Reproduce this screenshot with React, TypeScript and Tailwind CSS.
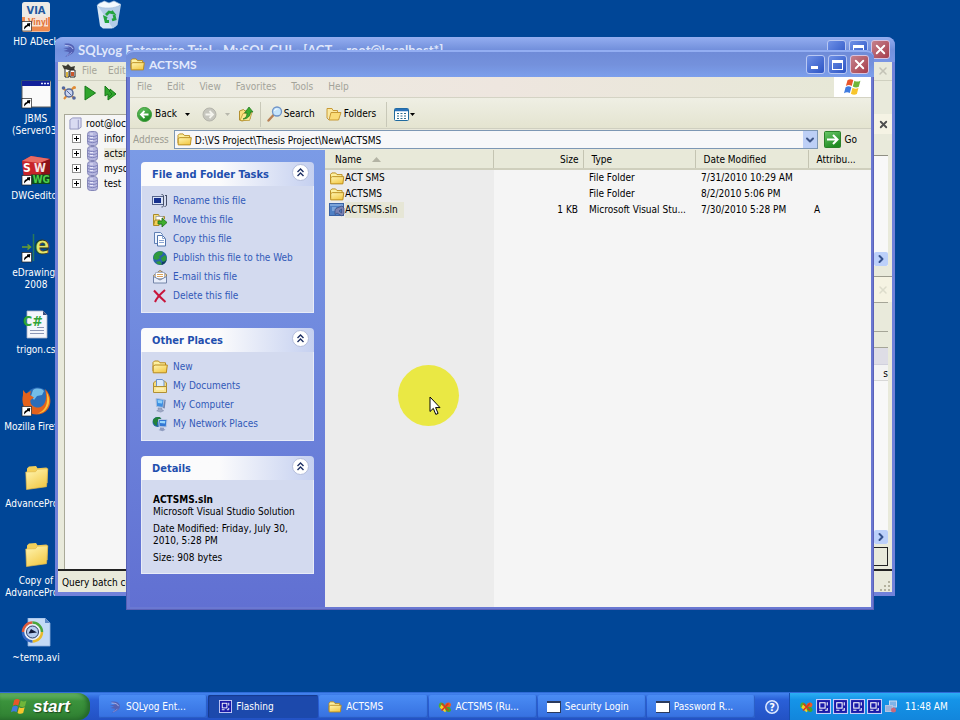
import React from "react";
import { ChevronDown, ChevronRight, X } from "lucide-react";

interface IconProps {
  className?: string;
}

interface DesktopItem {
  label: string[];
  icon: React.ReactNode;
}

interface LinkItem {
  label: string;
  icon: React.ReactNode;
}

// ---------- Shared icons ----------

function FolderIcon({ className }: IconProps) {
  return (
    <svg viewBox="0 0 16 14" className={className} aria-hidden="true">
      <path d="M1 11V2.500L2.500 1h4L8 2.800h5.500V5" fill="#fdf0a0" stroke="#b8891a" />
      <path d="M1.200 12.800V6L3 5h12.300l-1 7.800z" fill="url(#folder)" stroke="#b8891a" strokeLinejoin="round" />
    </svg>
  );
}

function BigFolder() {
  return (
    <svg viewBox="0 0 30 30" className="size-[30px]" aria-hidden="true">
      <path d="M6 22V4.500L8 2.500l7-.6 1.500 2.300 9-.7 1 1.500V19z" fill="#f2cf5a" />
      <path d="M5.500 25.500 4.800 8l9.700-.3 2-2.400 10.300-.6-1.300 18z" fill="url(#folder)" stroke="#e3b94a" strokeWidth=".7" />
    </svg>
  );
}

function Shortcut() {
  return (
    <g>
      <rect x="1" y="19.500" width="9.500" height="9.500" fill="#fff" stroke="#222" strokeWidth=".7" />
      <path d="M3 27.500c0-3 1-4.200 3-4.500v-1.500l3.300-.5-.5 3.800-1.200-.8c-2 .5-2.600 1.500-4.600 3.500z" fill="#000" />
    </g>
  );
}

function WindowsFlag({ className }: IconProps) {
  return (
    <svg viewBox="0 0 20 18" className={className} aria-hidden="true">
      <path d="M4.500 2.200c2-1.500 4-1.300 5.800-.1L8.700 8c-2-1.200-3.800-1.200-5.800.1z" fill="#e8562b" />
      <path d="M11.400 2.700c2 1.200 4 1.200 6 0l-1.600 6c-2 1.200-4 1-6-.2z" fill="#6fb63a" />
      <path d="M2.600 9.200c2-1.300 3.900-1.200 5.800 0L6.800 15c-2-1.200-3.800-1.100-5.800.2z" fill="#3f7be0" />
      <path d="M9.500 9.700c2 1.200 4 1.300 6 .1L13.900 16c-2 1.200-4 1-6-.2z" fill="#f7c52d" />
    </svg>
  );
}

function DolphinIcon({ className }: IconProps) {
  return (
    <svg viewBox="0 0 16 16" className={className} aria-hidden="true">
      <path d="M3 2c5-1.200 10 .5 10.500 4.500C14 11 9.500 13 4 15c2.500-2 4-3.500 4-5L2.500 9 7 7.500 2 6l6-.5C7 4 5 3 3 2z" fill="#5361b4" />
      <path d="M4 3.500c4.500 0 7 1 8 3.500" stroke="#b4bff0" fill="none" />
      <path d="M11 10c-1 1.500-3 2.500-5 3.500" stroke="#8b95dc" fill="none" />
    </svg>
  );
}

function CamIcon({ className }: IconProps) {
  return (
    <svg viewBox="0 0 14 14" className={className} aria-hidden="true">
      <rect x=".5" y=".5" width="13" height="13" fill="#1a1aa8" stroke="#c9cdfa" />
      <rect x="3.500" y="3.500" width="5" height="5" fill="none" stroke="#fff" />
      <path d="M8.500 10.500h2v-2M10.500 3v3M3 10.500h3" stroke="#fff" fill="none" />
    </svg>
  );
}

function RibbonIcon({ className }: IconProps) {
  return (
    <svg viewBox="0 0 16 14" className={className} aria-hidden="true">
      <path d="M1 4c1-3 5-3 7 1L5 9C2 9 0 7 1 4z" fill="#4fae2c" />
      <path d="M8 5c1-4 6-4 7-1 0 3-2 4-5 4z" fill="#ef5a24" />
      <path d="M4 4l7 6-3 3-6-5z" fill="#f5cf28" />
      <path d="M9 7c4-1 6 1 6 4-2 3-6 2-7-2z" fill="#3fa82f" />
      <path d="M4 3l8 8M12 3l-8 8" stroke="#d9361d" strokeWidth="1.800" />
    </svg>
  );
}

function AppWindowIcon({ className }: IconProps) {
  return (
    <svg viewBox="0 0 14 12" className={className} aria-hidden="true">
      <rect width="14" height="12" fill="#2b3a5c" />
      <rect y="2" width="13" height="9" fill="#fff" />
    </svg>
  );
}

function Caret({ className }: IconProps) {
  return (
    <svg viewBox="0 0 5 3" className={className} aria-hidden="true">
      <path d="M0 0h5L2.500 3z" fill="currentColor" />
    </svg>
  );
}

function SlnIcon() {
  return (
    <svg viewBox="0 0 16 14" className="h-3.5 w-4" aria-hidden="true">
      <rect x=".5" y=".5" width="14" height="12" fill="#4f80c4" stroke="#3a62a4" />
      <path d="M1 2h13M3 5h4M3 7h3" stroke="#a9c6ee" />
      <path d="M8 5l5-2 2 2v6l-2 2-5-3-2 1.500v-5zM12.500 6 10 8l2.500 2z" fill="#7b83b4" stroke="#3a4a80" strokeWidth=".7" />
    </svg>
  );
}

// ---------- Task pane icons ----------

function RenameIcon() {
  return (
    <svg viewBox="0 0 16 16" className="size-4" aria-hidden="true">
      <rect x=".5" y="3.500" width="11" height="8" fill="#d8e2f8" stroke="#56648c" />
      <rect x="2" y="5" width="7" height="5" fill="#15308f" />
      <path d="M9.500 1.500c1.500 0 2 .5 2 1.500v9.500c0 1-.5 1.500-2 1.500M14.500 2.500V12c0 1-1 1.500-2 1.500M13 2.500h2" stroke="#444d66" fill="none" />
    </svg>
  );
}

function MoveIcon() {
  return (
    <svg viewBox="0 0 16 16" className="size-4" aria-hidden="true">
      <path d="M1.500 13V2.500h5l1 2h5V7" fill="#f8e184" stroke="#a98a2a" />
      <rect x="4" y="4.500" width="7" height="8" fill="#fff" stroke="#8b93a8" strokeWidth=".7" />
      <path d="M1.500 13.500 3 8h5l-1 5.500z" fill="#f4cf55" stroke="#a98a2a" />
      <path d="M6 9h4V6l5 4.500-5 4.500v-3H6z" fill="#3fae2e" stroke="#1d6e17" strokeWidth=".8" />
    </svg>
  );
}

function CopyIcon() {
  return (
    <svg viewBox="0 0 16 16" className="size-4" aria-hidden="true">
      <path d="M2.500 1.500h6l2 2v9h-8z" fill="#eef4fe" stroke="#6080b4" />
      <path d="M5.500 4.500h5l3 3v7.500h-8z" fill="#fff" stroke="#5174ac" />
      <path d="M10.500 4.500v3h3M7 9.500h5M7 11.500h5" stroke="#8aa5d2" fill="none" />
    </svg>
  );
}

function GlobeIcon() {
  return (
    <svg viewBox="0 0 16 16" className="size-4" aria-hidden="true">
      <circle cx="8" cy="8" r="7" fill="#2a63a8" />
      <path d="M2 5c2-4 7-4.500 9-3l-1 3-3 1 1 2-3 2-3.500-1zM9 8l4-3c2 2 2 5 0 7.500L10 11zM4 12l4-1 2 3.500c-2 .6-5 0-6-2.500z" fill="#2f9a3c" />
      <path d="M10 12c2 0 4-1 4.500-3 0 3-2 5.500-5 6z" fill="#143f66" />
    </svg>
  );
}

function MailIcon() {
  return (
    <svg viewBox="0 0 16 16" className="size-4" aria-hidden="true">
      <path d="M1.500 6.500 8 1.500l6.500 4v8h-13z" fill="#f3cd8c" stroke="#8a7d68" />
      <path d="M3.500 3.500h9v6h-9z" fill="#fff" stroke="#9aa7c4" strokeWidth=".8" />
      <path d="M5 5.500h6M5 7.500h6" stroke="#d9a25c" />
      <path d="M1.500 7.500 8 11l6.500-3.500v6.500h-13z" fill="#e7edfa" stroke="#7384a8" />
    </svg>
  );
}

function DeleteIcon() {
  return (
    <svg viewBox="0 0 16 16" className="size-4" aria-hidden="true">
      <path d="M2 2.500C5 6 9 10 13.500 14M13 2C9.500 5 5 9.500 3 14" stroke="#c8163c" strokeWidth="2" fill="none" />
    </svg>
  );
}

function DocsIcon() {
  return (
    <svg viewBox="0 0 16 16" className="size-4" aria-hidden="true">
      <path d="M1.500 13V5l2-2h9l2 2v8z" fill="#f8dc78" stroke="#b08f34" />
      <path d="M4.500 1.500h6l1.500 2v6h-7.500z" fill="#dcebfc" stroke="#6b93cf" />
      <path d="M1.500 8.500h13v6h-13z" fill="#fae693" stroke="#b08f34" />
      <path d="M4 11h8" stroke="#fffbe0" />
    </svg>
  );
}

function ComputerIcon() {
  return (
    <svg viewBox="0 0 16 16" className="size-4" aria-hidden="true">
      <path d="M4 1.500 12 2.500 11 10.500l-6.500-1z" fill="#3d8fe2" stroke="#aebfdc" />
      <path d="M5.500 3l5 .6-.5 2.900-4-.5z" fill="#8fd0fa" />
      <path d="M12.500 2.500l1.200.5-1 8.500-1.700-.5z" fill="#6f83ac" />
      <path d="M6 11l4 .5v1.500l1.700.7-3 1.400-4-1.300 1.700-.9z" fill="#9fa9c6" stroke="#7380a0" strokeWidth=".5" />
    </svg>
  );
}

function NetworkIcon() {
  return (
    <svg viewBox="0 0 16 16" className="size-4" aria-hidden="true">
      <circle cx="5.500" cy="6" r="5" fill="#2567a8" />
      <path d="M1 4c2-4 7-3.500 8-2L7 5 5 6v4C2 9 .5 6.500 1 4z" fill="#23813a" />
      <path d="M6.500 3.500h8.500l-.8 7.500-7-.5z" fill="#3277d4" stroke="#b9c7e2" />
      <path d="M8 5h5.300l-.3 2.500L8 7z" fill="#97d4fa" />
      <path d="M8 11.500l4 .3v1.200l1.500.8-3 1.400-4-1.300 1.500-.7z" fill="#8f9cc0" />
    </svg>
  );
}

// ---------- Desktop icons ----------

const desktopItems: DesktopItem[] = [
  {
    label: ["HD ADeck"],
    icon: (
      <svg viewBox="0 0 30 30" className="size-[30px]" aria-hidden="true">
        <rect x="1" y="0" width="28" height="30" rx="2.500" fill="#eceae6" />
        <path d="M1 15h28v12.500a2 2 0 0 1-2 2H3a2 2 0 0 1-2-2z" fill="#ee8a50" />
        <rect x="4" y="14.500" width="23" height="10" fill="#f8e3d6" />
        <text x="15" y="11.500" textAnchor="middle" fontSize="11" fontWeight="bold" fill="#22589f">VIA</text>
        <text x="17" y="22.500" textAnchor="middle" fontSize="8" fontWeight="bold" fill="#e2743a">Vinyl</text>
        <Shortcut />
      </svg>
    ),
  },
  {
    label: ["JBMS", "(Server03)"],
    icon: (
      <svg viewBox="0 0 30 30" className="size-[30px]" aria-hidden="true">
        <rect x="1" y="2" width="29" height="26" fill="#fafafa" stroke="#5b5b5b" />
        <rect x="1" y="2" width="28" height="5" fill="#12219a" />
        <path d="M20 4.500h2M23 4.500h2M26 4.500h2" stroke="#dfe4ff" strokeWidth="1.500" />
        <Shortcut />
      </svg>
    ),
  },
  {
    label: ["DWGeditor"],
    icon: (
      <svg viewBox="0 0 30 30" className="size-[30px]" aria-hidden="true">
        <path d="M1 5 10 0l19 3v14l-10 7H3z" fill="#c8242a" />
        <path d="M1 5 10 0l19 3-10 4z" fill="#e76b64" />
        <path d="M19 7l10-4v15l-8 5z" fill="#8c1218" />
        <text x="2" y="16" fontSize="12" fontWeight="bold" fill="#fff">S</text>
        <text x="13" y="16" fontSize="12" fontWeight="bold" fill="#f6e4e4">W</text>
        <rect x="10" y="18.500" width="19" height="9.500" fill="#0d4a1c" />
        <text x="29" y="27" textAnchor="end" fontSize="10" fontWeight="bold" fill="#4fd04c">WG</text>
        <Shortcut />
      </svg>
    ),
  },
  {
    label: ["eDrawings", "2008"],
    icon: (
      <svg viewBox="0 0 30 30" className="size-[30px] overflow-visible" aria-hidden="true">
        <path d="M12.500 1v27" stroke="#28795b" strokeWidth="1.500" />
        <path d="M1 14h8M6.500 11.500 9.500 14l-3 2.500" stroke="#6aa02e" strokeWidth="1.500" fill="none" />
        <text x="14" y="21" fontSize="24" fontWeight="bold" fill="#e4e56b" stroke="#333a1a" strokeWidth=".8">e</text>
        <Shortcut />
      </svg>
    ),
  },
  {
    label: ["trigon.cs"],
    icon: (
      <svg viewBox="0 0 30 30" className="size-[30px]" aria-hidden="true">
        <path d="M6 1h16l4 4v23H6z" fill="#f4f6fb" stroke="#a9b2c8" strokeWidth=".8" />
        <path d="M22 1v4h4z" fill="#3c4f7a" />
        <path d="M9 20.500h14M9 23.500h14M16 17.500h7" stroke="#8c97b5" />
        <text x="2" y="16" fontSize="14" fontWeight="bold" fill="#30a436">C#</text>
      </svg>
    ),
  },
  {
    label: ["Mozilla Firefox"],
    icon: (
      <svg viewBox="0 0 30 30" className="size-[30px]" aria-hidden="true">
        <circle cx="16.500" cy="12.500" r="12" fill="#2b6dba" />
        <path d="M12 3c3-2 8-2 11 1l-2 4-5 1-3 4-3-4z" fill="#73bde9" />
        <path d="M24 2c6 5 7 14 3 20-5 7-16 7-21 2C2 20 .5 14 2 8l0-5 3 3.500L10 4l-1 4 4 2.500-3.500 2.500c-1 5 4 8 8 7.500 6-.5 9.500-8 6.500-18.500z" fill="#e4621c" />
        <path d="M25.500 5c4 6 3.500 13-1 18-2 2-5 3.500-8 3.500 7-2 11.500-9 9-21.500z" fill="#fbc23a" />
        <Shortcut />
      </svg>
    ),
  },
  { label: ["AdvancePro..."], icon: <BigFolder /> },
  { label: ["Copy of", "AdvancePro..."], icon: <BigFolder /> },
  {
    label: ["~temp.avi"],
    icon: (
      <svg viewBox="0 0 30 30" className="size-[30px]" aria-hidden="true">
        <path d="M7 0h17l5 5v23H7z" fill="#c4daf6" stroke="#8fb0dd" strokeWidth=".8" />
        <path d="M24 0v5h5z" fill="#5c86c4" />
        <circle cx="11.500" cy="14" r="9.500" fill="#e9eef6" />
        <path d="M2 14a9.500 9.500 0 0 1 9.500-9.500" stroke="#de5b3c" strokeWidth="2.500" fill="none" />
        <path d="M11.500 4.500A9.500 9.500 0 0 1 21 14" stroke="#4aa63c" strokeWidth="2.500" fill="none" />
        <path d="M21 14a9.500 9.500 0 0 1-9.500 9.500" stroke="#e8b92c" strokeWidth="2.500" fill="none" />
        <path d="M11.500 23.500A9.500 9.500 0 0 1 2 14" stroke="#3567c2" strokeWidth="2.500" fill="none" />
        <circle cx="11.500" cy="14" r="6" fill="#b7cdf0" stroke="#2c3f6b" />
        <path d="M7.500 15.500 10 11l6 3.500z" fill="#10193a" />
      </svg>
    ),
  },
];

function RecycleBin() {
  return (
    <svg viewBox="0 0 30 30" className="size-[30px]" aria-hidden="true">
      <path d="M3 6l22-1-3 21-4 2.500H9L6 26z" fill="#d7e6f5" />
      <path d="M4 6c5 3 17 2.500 23-1.500L23.500 25 19 28.500z" fill="#b4cde8" />
      <path d="M3 6c2-4 5-3 7-5l5 2 5-2 7 3.500C21 9 9 9 3 6z" fill="#f5fafe" stroke="#a5bfdc" strokeWidth=".7" />
      <path d="M12 15l3-3 4 1-1.500-2M20 15l1 4-3 1M15 21.500h-3l-1-4 2 1" stroke="#22a33d" strokeWidth="2.800" fill="none" />
    </svg>
  );
}

// ---------- Window chrome ----------

function WindowButtons() {
  return (
    <div className="flex gap-[3px]">
      <button aria-label="Minimize" className="flex size-[19px] items-end rounded-[3px] border border-[#b9c8f3] bg-linear-to-br from-[#6f90e6] to-[#2c53c4] p-1">
        <span className="h-[3px] w-[7px] bg-white" />
      </button>
      <button aria-label="Maximize" className="flex size-[19px] items-center justify-center rounded-[3px] border border-[#b9c8f3] bg-linear-to-br from-[#6f90e6] to-[#2c53c4]">
        <span className="h-[10px] w-[11px] border border-t-[3px] border-white" />
      </button>
      <button aria-label="Close" className="flex size-[19px] items-center justify-center rounded-[3px] border border-[#d6c3e0] bg-linear-to-br from-[#c4808c] to-[#a63c4c]">
        <X className="size-[15px] text-white" strokeWidth={3} />
      </button>
    </div>
  );
}

function ScrollRight() {
  return (
    <button aria-label="Scroll right" className="flex size-[14px] items-center justify-center rounded-[2px] bg-[#bcd0fa]">
      <ChevronRight className="size-3 text-[#34508c]" strokeWidth={4} />
    </button>
  );
}

const databases = ["infor", "actsms", "mysql", "test"];

function SqlYogWindow() {
  return (
    <section className="absolute top-[37px] right-[65px] bottom-[96px] left-[55px] flex flex-col rounded-t-lg bg-[#7182da] px-[3px] pb-1">
      <header className="-mx-[3px] flex h-[25px] shrink-0 items-start justify-between rounded-t-lg bg-linear-to-b from-[#94aef0] via-[#7390dc] to-[#7a96e4] pt-[3px] pr-[5px] pl-[6px]">
        <div className="flex items-center pt-px">
          <DolphinIcon className="mr-px size-4" />
          <h1 className="font-[Lato] text-[13px] leading-[18px] font-bold whitespace-pre text-[#dfe6fb]">
            SQLyog Enterprise Trial - MySQL GUI - [ACT  - root@localhost*]
          </h1>
        </div>
        <WindowButtons />
      </header>

      <div className="flex min-h-0 flex-1 flex-col bg-[#e9eadb]">
        <nav className="flex h-[19px] shrink-0 items-center gap-3 border-b border-[#cfd0c0] px-[3px] text-[#a5a598]">
          <svg viewBox="0 0 16 16" className="size-4" aria-hidden="true">
            <path d="M1 2l4 1 2-2 3 3 4-1-1 4H8L3 6z" fill="#3a3a32" />
            <path d="M4 6v8h4V8M9 7h5v7H9z" fill="#fff" stroke="#222" />
            <path d="M10 9h3v4h-3z" fill="#c9562c" />
            <path d="M5 9h2v5H5z" fill="#d8b23c" />
          </svg>
          <div className="-ml-[7px] flex flex-1 gap-[11px]">
            <button>File</button>
            <button>Edit</button>
          </div>
          <button aria-label="Close document">
            <X className="size-3 text-[#c3c3b6]" strokeWidth={3} />
          </button>
        </nav>

        <div className="flex h-[33px] shrink-0 items-start gap-1.5 pt-1 pl-[3px]">
          <svg viewBox="0 0 16 16" className="size-4" aria-hidden="true">
            <path d="M2 3l11 10M13 2 3 14" stroke="#e08b34" strokeWidth="2" />
            <circle cx="8" cy="8" r="4" fill="#c9d4ee" stroke="#54699c" strokeWidth="1.500" />
            <path d="M6 6l4 4" stroke="#54699c" />
            <circle cx="2.500" cy="3" r="1.800" fill="#53689e" />
            <circle cx="13" cy="13" r="1.800" fill="#53689e" />
            <circle cx="13.500" cy="2.500" r="1.500" fill="#e08b34" />
          </svg>
          <svg viewBox="0 0 12 16" className="ml-px h-4 w-3" aria-hidden="true">
            <path d="M1 1 11.500 8 1 15z" fill="#2fa52c" stroke="#187a1a" />
          </svg>
          <svg viewBox="0 0 14 16" className="ml-0.5 h-4 w-3.5" aria-hidden="true">
            <path d="M1 1v10l3-2v6l8-6-6-5v2z" fill="#2fa52c" stroke="#187a1a" />
            <path d="M5 6l3 3-3 3" stroke="#187a1a" fill="none" />
          </svg>
        </div>

        <div className="flex min-h-0 flex-1 pl-[6px]">
          <div className="flex-1 border-t border-l border-[#a9a998] bg-[#f6f6f6] pt-px pl-1">
            <div className="flex h-[15px] items-center gap-1">
              <svg viewBox="0 0 14 14" className="size-[13px]" aria-hidden="true">
                <path d="M1 3l3-2h9v10l-3 2H1z" fill="#d9dbf2" stroke="#9093bd" />
                <path d="M10 3v10" stroke="#9093bd" />
              </svg>
              <span>root@localhost</span>
            </div>
            <ul>
              {databases.map((name) => (
                <li key={name} className="flex h-[15px] items-center gap-1.5 pl-[3px]">
                  <span className="flex size-[9px] items-center justify-center border border-[#8e8e8e] bg-white">
                    <svg viewBox="0 0 5 5" className="size-[5px]" aria-hidden="true">
                      <path d="M0 2.500h5M2.500 0v5" stroke="#000" />
                    </svg>
                  </span>
                  <svg viewBox="0 0 11 15" className="h-[15px] w-[11px]" aria-hidden="true">
                    <rect x=".5" y=".5" width="10" height="14" rx="3" fill="#b5b6de" stroke="#8587b8" />
                    <path d="M1 4.500c3 1.500 6 1.500 9 0M1 7.500c3 1.500 6 1.500 9 0M1 10.500c3 1.500 6 1.500 9 0" stroke="#7f82bc" fill="none" />
                    <path d="M3 3h3M3 6.500h3M3 9.500h3" stroke="#e8e8fa" />
                  </svg>
                  <span className={name === "actsms" ? "bg-[#eceadb]" : ""}>{name}</span>
                </li>
              ))}
            </ul>
          </div>

          {/* Query and result panes, mostly behind the folder window */}
          <div className="flex w-[200px] flex-col pr-[4px]">
            <div className="-mr-[4px] flex h-[20px] items-center justify-end bg-[#f5f3e4] pr-[3px]">
              <button aria-label="Close query tab">
                <X className="size-[11px] text-[#4e4e4e]" strokeWidth={4} />
              </button>
            </div>
            <div className="h-[21px]" />
            <div className="flex h-[111px] items-end justify-end border-t border-[#8f8f84] bg-[#f8f8f8]">
              <ScrollRight />
            </div>
            <div className="h-[10px]" />
            <div className="-mr-[4px] flex h-[26px] items-center justify-end border-t border-[#9b9b8d] bg-[#f5f3e2] pr-[3px]">
              <button aria-label="Close result tab">
                <X className="size-3 text-[#dddccb]" strokeWidth={3} />
              </button>
            </div>
            <div className="h-[29px] border-t border-[#a5a597]" />
            <div className="h-[16px] border-t border-[#a5a597]" />
            <div className="h-[18px] border-y border-[#a5a597] border-b-[#d0d0dc] bg-[#dedde6]" />
            <div className="h-[16px] border-b border-[#d8d8d8] bg-[#f3f3f3] pt-[3px] text-right">s</div>
            <div className="flex flex-1 items-end justify-end bg-[#f8f8f8]">
              <ScrollRight />
            </div>
            <div className="my-[3px] h-[19px] shrink-0 border border-[#222]" />
          </div>
        </div>

        <footer className="flex h-[23px] shrink-0 items-center justify-between border-t-2 border-[#222] pt-0.5 pl-1">
          <span>Query batch completed successfully</span>
          <svg viewBox="0 0 12 12" className="mt-1 mr-px size-3" aria-hidden="true">
            <path d="M10 2v2M10 6v2M10 10v2M6 6v2M6 10v2M2 10v2" stroke="#b3b29d" strokeWidth="2" />
          </svg>
        </footer>
      </div>
    </section>
  );
}

// ---------- Folder window ----------

const fileTasks: LinkItem[] = [
  { label: "Rename this file", icon: <RenameIcon /> },
  { label: "Move this file", icon: <MoveIcon /> },
  { label: "Copy this file", icon: <CopyIcon /> },
  { label: "Publish this file to the Web", icon: <GlobeIcon /> },
  { label: "E-mail this file", icon: <MailIcon /> },
  { label: "Delete this file", icon: <DeleteIcon /> },
];

const otherPlaces: LinkItem[] = [
  { label: "New", icon: <FolderIcon className="h-3.5 w-4" /> },
  { label: "My Documents", icon: <DocsIcon /> },
  { label: "My Computer", icon: <ComputerIcon /> },
  { label: "My Network Places", icon: <NetworkIcon /> },
];

const files = [
  { name: "ACT SMS", size: "", type: "File Folder", date: "7/31/2010 10:29 AM", attr: "" },
  { name: "ACTSMS", size: "", type: "File Folder", date: "8/2/2010 5:06 PM", attr: "" },
  { name: "ACTSMS.sln", size: "1 KB", type: "Microsoft Visual Stu...", date: "7/30/2010 5:28 PM", attr: "A" },
];

function TaskPanel({ title, children }: { title: string; children: React.ReactNode }) {
  return (
    <section>
      <header className="flex h-6 items-center justify-between rounded-t-[4px] bg-linear-to-r from-[#fbfbfc] from-45% to-[#c5d0f0] pr-[5px] pl-[11px]">
        <h2 className="pt-px text-[11px] font-bold text-[#1f4fae]">{title}</h2>
        <button aria-label={`Collapse ${title}`} className="mb-1 flex size-[17px] items-center justify-center rounded-full border border-[#b3bddb] bg-white">
          <svg viewBox="0 0 9 9" className="size-[9px]" aria-hidden="true">
            <path d="M1.500 4 4.500 1l3 3M1.500 8l3-3 3 3" stroke="#1d2f63" strokeWidth="1.400" fill="none" />
          </svg>
        </button>
      </header>
      <div className="border border-t-0 border-[#e8ecf8] bg-[#d3daef]">{children}</div>
    </section>
  );
}

function LinkList({ items }: { items: LinkItem[] }) {
  return (
    <ul className="pt-[5px] pb-[7px] pl-[10px]">
      {items.map((item) => (
        <li key={item.label} className="h-[19px]">
          <a href="#" className="flex h-full items-center gap-[5px] text-[#3159b8]">
            {item.icon}
            {item.label}
          </a>
        </li>
      ))}
    </ul>
  );
}

function ExplorerWindow() {
  return (
    <section className="absolute top-[50px] right-[86px] bottom-[82px] left-[126px] flex flex-col rounded-t-lg bg-[#6a78d2] pr-[3px] pb-[3px] pl-1 shadow-[inset_1px_0_0_#5660b4,inset_-1px_-1px_0_#5b62b8]">
      <header className="-mr-[3px] -ml-1 flex h-[27px] shrink-0 items-center justify-between rounded-t-lg border-t-2 border-[#93aef2] bg-linear-to-b from-[#6f8bd8] via-[#7491dc] to-[#7c9fec] pr-[5px] pl-1">
        <div className="flex items-center gap-1">
          <FolderIcon className="h-[13px] w-[15px]" />
          <h1 className="font-[Lato] text-[12px] leading-4 font-bold text-[#e3eafc]">ACTSMS</h1>
        </div>
        <WindowButtons />
      </header>

      <nav className="flex h-[21px] shrink-0 items-stretch justify-between border-b border-[#d4d3c4] bg-linear-to-r from-[#ecede2] via-[#eee6df] to-[#e6e8d6]">
        <div className="flex gap-[15px] pl-[7px] text-[#a3a39a]">
          <button>File</button>
          <button>Edit</button>
          <button>View</button>
          <button>Favorites</button>
          <button>Tools</button>
          <button>Help</button>
        </div>
        <div className="flex w-[37px] items-center justify-center bg-white">
          <WindowsFlag className="h-[18px] w-5" />
        </div>
      </nav>

      <div className="flex h-[31px] shrink-0 items-center border-b border-[#cfcfc0] bg-linear-to-b from-[#efefe4] to-[#e4e4d0] pt-0.5 pl-[7px]">
        <button className="flex items-center gap-[3px]">
          <svg viewBox="0 0 15 15" className="size-[15px]" aria-hidden="true">
            <circle cx="7.500" cy="7.500" r="7" fill="url(#green)" stroke="#3b9a37" />
            <path d="M11.500 7.500h-7M7.500 4 4 7.500 7.500 11" stroke="#fff" strokeWidth="1.800" fill="none" />
          </svg>
          Back
        </button>
        <button aria-label="Back history" className="ml-2">
          <Caret className="h-[3px] w-[5px]" />
        </button>
        <button aria-label="Forward" className="ml-3">
          <svg viewBox="0 0 15 15" className="size-[15px]" aria-hidden="true">
            <circle cx="7.500" cy="7.500" r="6.500" fill="#c6c6be" stroke="#b4b4aa" />
            <path d="M3.500 7.500h7M7.500 4 11 7.500 7.500 11" stroke="#f4f4ee" strokeWidth="1.800" fill="none" />
          </svg>
        </button>
        <button aria-label="Forward history" className="ml-2 text-[#b8b8ac]">
          <Caret className="h-[3px] w-[5px]" />
        </button>
        <button aria-label="Up" className="ml-2">
          <svg viewBox="0 0 16 16" className="size-4" aria-hidden="true">
            <path d="M1.500 14V5l4-1.500L7 5l5-1v9l-8 2z" fill="#f9df7c" stroke="#b3902e" />
            <path d="M2 14.500l3-7 9-1-2.500 8z" fill="#fbe78f" stroke="#b3902e" strokeWidth=".7" />
            <path d="M5 13c3-1 4-3 4-6H6.500L11 1l4 5h-2.500c0 4-3 7-7.500 7z" fill="#3bab2d" stroke="#1c731a" strokeWidth=".7" />
          </svg>
        </button>
        <span className="mx-1.5 h-[25px] w-px bg-[#c8c8b8]" />
        <button className="flex items-center gap-px">
          <svg viewBox="0 0 16 16" className="size-4" aria-hidden="true">
            <path d="M6.500 9 1.500 14.500" stroke="#b98155" strokeWidth="2.400" strokeLinecap="round" />
            <circle cx="10" cy="5.500" r="4.500" fill="#c5e4fb" stroke="#6f94c8" strokeWidth="1.300" />
            <path d="M7.500 5c.5-1.500 1.500-2 3-2" stroke="#fff" fill="none" />
          </svg>
          Search
        </button>
        <button className="ml-[11px] flex items-center gap-0.5">
          <svg viewBox="0 0 16 14" className="h-3.5 w-4" aria-hidden="true">
            <path d="M1 11V1.500h5l1 2h4.500V6" fill="#fbe9a0" stroke="#c89a35" />
            <path d="M3 13l2-7.500h10L12.500 13z" fill="#fbdc76" stroke="#c89a35" />
            <path d="M1 11l2 2" stroke="#c89a35" />
          </svg>
          Folders
        </button>
        <span className="mr-[7px] ml-2.5 h-[25px] w-px bg-[#c8c8b8]" />
        <button aria-label="Views" className="flex items-center gap-px">
          <svg viewBox="0 0 15 13" className="h-[13px] w-[15px]" aria-hidden="true">
            <rect x=".5" y=".5" width="14" height="12" rx="1" fill="#fff" stroke="#1f6a9f" />
            <path d="M1 2h13" stroke="#2a72b8" strokeWidth="2.500" />
            <path d="M3 5.500h2M6.500 5.500h2M10 5.500h2M3 8h2M6.500 8h2M10 8h2M3 10.500h2M6.500 10.500h2M10 10.500h2" stroke="#2f6f8f" />
          </svg>
          <Caret className="h-[3px] w-[5px]" />
        </button>
      </div>

      <div className="flex h-[21px] shrink-0 items-center bg-[#eae9db] pl-[3px]">
        <label htmlFor="address" className="pt-px text-[#9c9c92]">
          Address
        </label>
        <div className="ml-[5px] flex h-[19px] flex-1 items-center border border-[#7d97b4] bg-[#f7f7f9] pl-0.5">
          <FolderIcon className="h-[13px] w-[15px] shrink-0" />
          <input id="address" defaultValue="D:\VS Project\Thesis Project\New\ACTSMS" className="ml-[3px] min-w-0 flex-1 bg-transparent pt-0.5 outline-none" />
          <button aria-label="Show addresses" className="flex h-full w-[14px] items-center justify-center bg-[#bdcff6]">
            <ChevronDown className="size-3 text-[#3f5688]" strokeWidth={4} />
          </button>
        </div>
        <button className="mr-[14px] ml-1.5 flex items-center gap-1">
          <svg viewBox="0 0 17 17" className="size-[17px]" aria-hidden="true">
            <rect x=".5" y=".5" width="16" height="16" rx="1" fill="url(#green)" stroke="#2b8129" />
            <path d="M3 8.500h10M9 4l4.500 4.500L9 13" stroke="#fff" strokeWidth="2" fill="none" />
          </svg>
          Go
        </button>
      </div>

      <div className="flex min-h-0 flex-1">
        <aside className="flex w-[195px] shrink-0 flex-col gap-[15px] bg-linear-to-b from-[#7b9be6] to-[#6170d2] px-[11px] pt-3">
          <TaskPanel title="File and Folder Tasks">
            <LinkList items={fileTasks} />
          </TaskPanel>
          <TaskPanel title="Other Places">
            <LinkList items={otherPlaces} />
          </TaskPanel>
          <TaskPanel title="Details">
            <div className="px-[11px] pt-3.5 pb-[9px] leading-3">
              <p className="font-bold">ACTSMS.sln</p>
              <p>Microsoft Visual Studio Solution</p>
              <p className="mt-[5px]">Date Modified: Friday, July 30, 2010, 5:28 PM</p>
              <p className="mt-[5px]">Size: 908 bytes</p>
            </div>
          </TaskPanel>
        </aside>

        <div className="flex-1 bg-[linear-gradient(to_right,#ececec_169px,#f5f5f5_169px)]">
          <table className="w-full table-fixed text-left">
            <colgroup>
              <col className="w-[168px]" />
              <col className="w-[90px]" />
              <col className="w-[112px]" />
              <col className="w-[113px]" />
              <col />
            </colgroup>
            <thead>
              <tr className="h-[19px] border-b-2 border-[#cfcfbd] bg-[#e8e9d9]">
                <th className="border-r border-[#c4c4b2] pt-px pl-[10px] font-normal">
                  <span className="flex items-center gap-2.5">
                    Name
                    <svg viewBox="0 0 9 5" className="h-[5px] w-[9px]" aria-hidden="true">
                      <path d="M0 5h9L4.500 0z" fill="#b3b3a4" />
                    </svg>
                  </span>
                </th>
                <th className="border-r border-[#c4c4b2] pt-px pr-1 text-right font-normal">Size</th>
                <th className="border-r border-[#c4c4b2] pt-px pl-2 font-normal">Type</th>
                <th className="border-r border-[#c4c4b2] pt-px pl-2 font-normal">Date Modified</th>
                <th className="pt-px pl-2 font-normal">Attribu...</th>
              </tr>
            </thead>
            <tbody>
              {files.map((file) => (
                <tr key={file.name} className="h-4">
                  <td className="pl-1">
                    <span className="flex h-4 items-center">
                      {file.attr ? <SlnIcon /> : <FolderIcon className="h-[13px] w-4" />}
                      <span className={file.attr ? "bg-[#e6e6d6] pr-1.5 leading-4" : ""}>{file.name}</span>
                    </span>
                  </td>
                  <td className="pr-[5px] text-right">{file.size}</td>
                  <td className="pl-1.5 whitespace-nowrap">{file.type}</td>
                  <td className="pl-1.5 whitespace-nowrap">{file.date}</td>
                  <td className="pl-1.5">{file.attr}</td>
                </tr>
              ))}
            </tbody>
          </table>
        </div>
      </div>
    </section>
  );
}

// ---------- Taskbar ----------

const tasks = [
  { label: "SQLyog Ent...", icon: <DolphinIcon className="size-3.5" />, active: false },
  { label: "Flashing", icon: <CamIcon className="size-[13px]" />, active: true },
  { label: "ACTSMS", icon: <FolderIcon className="h-3 w-3.5" />, active: false },
  { label: "ACTSMS (Ru...", icon: <RibbonIcon className="h-3 w-3.5" />, active: false },
  { label: "Security Login", icon: <AppWindowIcon className="h-3 w-3.5" />, active: false },
  { label: "Password R...", icon: <AppWindowIcon className="h-3 w-3.5" />, active: false },
];

function Taskbar() {
  return (
    <footer className="flex h-7 shrink-0 items-stretch border-t border-[#2f6bd8] bg-linear-to-b from-[#4384ee] via-[#2a60d8] via-25% to-[#2352c4]">
      <button className="flex w-[90px] items-center gap-1 rounded-r-xl bg-linear-to-b from-[#69b868] via-[#3b933c] via-30% to-[#2f7f31] pl-2.5 shadow-[inset_-3px_-1px_4px_#24662a]">
        <WindowsFlag className="h-[17px] w-[19px]" />
        <span className="font-['Liberation_Sans'] text-[17px] leading-5 font-bold text-white italic [text-shadow:1px_1px_1px_#1c4a1e]">start</span>
      </button>

      <div className="flex flex-1 gap-px pt-[2px] pb-[2px] pl-[9px] text-white">
        {tasks.map((task) => (
          <button
            key={task.label}
            className={
              task.active
                ? "flex flex-1 items-center gap-1 rounded-[2px] bg-[#1c49ac] pl-[11px] shadow-[inset_1px_1px_1px_#163a8c]"
                : "flex flex-1 items-center gap-1 rounded-[2px] bg-linear-to-b from-[#4a8cf4] to-[#3670e0] pl-[9px] shadow-[inset_-1px_-1px_1px_#2a5cc4]"
            }
          >
            {task.icon}
            {task.label}
          </button>
        ))}
      </div>

      <button aria-label="Help" className="flex w-[34px] items-center justify-center">
        <svg viewBox="0 0 14 14" className="size-[14px]" aria-hidden="true">
          <circle cx="7" cy="7" r="6.200" fill="#3a6cd8" stroke="#dbe7ff" strokeWidth="1.500" />
          <text x="7" y="11" textAnchor="middle" fontSize="11" fontWeight="bold" fill="#fff">?</text>
        </svg>
      </button>

      <div className="flex w-[171px] items-center gap-0.5 border-l border-[#164fb0] bg-linear-to-b from-[#2bb0f4] via-[#1594e8] via-25% to-[#1286dc] pl-[9px] text-white">
        <RibbonIcon className="h-3 w-[15px]" />
        <CamIcon className="size-[15px]" />
        <CamIcon className="size-[15px]" />
        <CamIcon className="size-[15px]" />
        <CamIcon className="size-[15px]" />
        <svg viewBox="0 0 14 14" className="size-[14px]" aria-hidden="true">
          <rect x="5.500" y="1" width="7" height="6" fill="#7fb4e8" stroke="#c6d9f0" />
          <rect x="1.500" y="5.500" width="7" height="6" fill="#9db3da" stroke="#b4c4e2" />
          <circle cx="9.500" cy="10" r="2.500" fill="#c9687c" />
        </svg>
        <time className="ml-[5px]">11:48 AM</time>
      </div>
    </footer>
  );
}

export default function App() {
  return (
    <div className="flex h-screen flex-col overflow-hidden bg-[#004697] font-['DejaVu_Sans_Condensed','Liberation_Sans',sans-serif] text-[10px] leading-3 text-black">
      <svg className="absolute size-0" aria-hidden="true">
        <defs>
          <linearGradient id="folder" x1="0" y1="0" x2="0.6" y2="1">
            <stop offset="0" stopColor="#fff6b4" />
            <stop offset="1" stopColor="#f3cb4c" />
          </linearGradient>
          <linearGradient id="green" x1="0" y1="0" x2="0.5" y2="1">
            <stop offset="0" stopColor="#6cc86a" />
            <stop offset="1" stopColor="#1f8a22" />
          </linearGradient>
        </defs>
      </svg>

      <main className="relative min-h-0 flex-1">
        <div className="flex">
          <ul className="w-[72px]">
            {desktopItems.map((item) => (
              <li key={item.label.join(" ")} className="flex h-[77px] flex-col items-center pt-0.5 whitespace-nowrap text-white">
                {item.icon}
                <span className="mt-1 text-center">
                  {item.label.map((line) => (
                    <span key={line} className="block">
                      {line}
                    </span>
                  ))}
                </span>
              </li>
            ))}
          </ul>
          <div className="flex w-[74px] flex-col items-center">
            <RecycleBin />
          </div>
        </div>

        <SqlYogWindow />
        <ExplorerWindow />

        {/* Highlighted mouse pointer */}
        <div className="absolute top-[365px] left-[398px] size-[61px] rounded-full bg-[#eae844]">
          <svg viewBox="0 0 12 20" className="absolute top-[31px] left-[31px] h-5 w-3" aria-hidden="true">
            <path d="M1 1v14.500l3.300-3.100 2.500 6 2.300-1-2.500-5.800H11z" fill="#fff" stroke="#000" />
          </svg>
        </div>
      </main>

      <Taskbar />
    </div>
  );
}
